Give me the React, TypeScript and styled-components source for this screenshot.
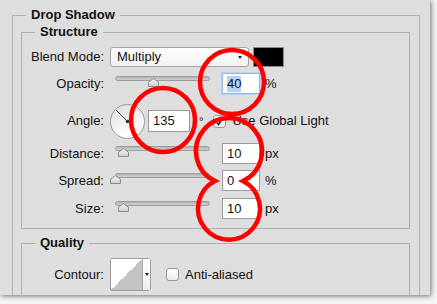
import React from 'react';
import styled, { createGlobalStyle } from 'styled-components';

const Global = createGlobalStyle`
  html, body { margin: 0; padding: 0; background: #f4f4f4; }
  body { font-family: "Liberation Sans", Arial, sans-serif; font-size: 13px; color: #111; }
  #root { width: 437px; height: 304px; }
`;

const PANEL_BG = '#dedede';
const LINE = '#b0b0b0';

const Stage = styled.div`
  position: relative;
  width: 437px;
  height: 304px;
  overflow: hidden;
`;

const Panel = styled.div`
  box-sizing: border-box;
  width: 430px;
  height: 295px;
  padding: 15px 0 0 12px;
  background: ${PANEL_BG};
  box-shadow: 1px 1px 5px rgba(0, 0, 0, 0.55);
  overflow: hidden;
  display: flex;
  flex-direction: column;
`;

const Group = styled.section<{ $w?: number; $closed?: boolean; $mt?: number; $pad?: string; $grow?: boolean }>`
  box-sizing: border-box;
  ${p => (p.$w ? `width: ${p.$w}px;` : '')}
  border: 1px solid ${LINE};
  border-bottom: ${p => (p.$closed ? `1px solid ${LINE}` : 'none')};
  margin-top: ${p => p.$mt ?? 0}px;
  padding: ${p => p.$pad ?? '0'};
  display: flex;
  flex-direction: column;
  ${p => (p.$grow ? 'flex: 1 0 auto;' : 'flex: none;')}
`;

const Legend = styled.h2<{ $indent: number }>`
  margin: -9px 0 0 ${p => p.$indent}px;
  padding: 0 5px;
  align-self: flex-start;
  background: ${PANEL_BG};
  font: bold 13px/16px "Liberation Sans", Arial, sans-serif;
  color: #111;
`;

const Row = styled.div<{ $h: number; $mt: number }>`
  display: flex;
  align-items: center;
  height: ${p => p.$h}px;
  margin-top: ${p => p.$mt}px;
  flex: none;
`;

const Label = styled.span`
  flex: none;
  width: 82px;
  margin-right: 6px;
  text-align: right;
  line-height: 16px;
  color: #111;
`;

const Select = styled.div`
  box-sizing: border-box;
  width: 139px;
  height: 20px;
  padding: 0 6px;
  border: 1px solid #a4a4a4;
  border-radius: 3px;
  background: linear-gradient(#ffffff, #f1f1f1);
  display: flex;
  align-items: center;
  justify-content: space-between;
  line-height: 16px;
`;

const Caret = styled.span`
  width: 0;
  height: 0;
  border-left: 2.5px solid transparent;
  border-right: 2.5px solid transparent;
  border-top: 3px solid #222;
`;

const Swatch = styled.div`
  box-sizing: border-box;
  width: 31px;
  height: 20px;
  margin-left: 4px;
  background: #000;
  border: 1px solid #8c8c8c;
`;

const SliderWrap = styled.div`
  position: relative;
  flex: none;
  align-self: stretch;
  width: 104px;
  padding-top: 3px;
  box-sizing: border-box;
`;

const Track = styled.div`
  box-sizing: border-box;
  margin-left: 5px;
  width: 95px;
  height: 5px;
  border: 1px solid #9d9d9d;
  border-radius: 3px;
  background: linear-gradient(#b4b4b4, #cfcfcf);
`;

const Thumb = styled.svg`
  position: absolute;
  top: 5px;
  width: 11px;
  height: 9px;
`;

const NumBox = styled.div<{ $w: number; $h: number; $focus?: boolean }>`
  box-sizing: border-box;
  flex: none;
  width: ${p => p.$w}px;
  height: ${p => p.$h}px;
  padding: 0 4px;
  background: #fff;
  border: 1px solid ${p => (p.$focus ? '#8fb6e6' : '#9c9c9c')};
  box-shadow: ${p => (p.$focus ? '0 0 0 1px #b9d3f3' : 'none')};
  display: flex;
  align-items: center;
  line-height: 16px;
`;

const Selected = styled.span`
  background: #b3d3fa;
`;

const Unit = styled.span`
  margin-left: 5px;
  line-height: 16px;
`;

const Gap = styled.span<{ $w: number }>`
  flex: none;
  width: ${p => p.$w}px;
`;

const Dial = styled.div`
  box-sizing: border-box;
  flex: none;
  width: 35px;
  height: 35px;
  border-radius: 50%;
  border: 1px solid #9a9a9a;
  background: linear-gradient(160deg, #dcdcdc, #fbfbfb 70%);
`;

const Degree = styled.span`
  flex: none;
  align-self: flex-start;
  margin: 12px 0 0 9px;
  font-size: 11px;
  line-height: 12px;
`;

const Check = styled.div<{ $ml: number }>`
  box-sizing: border-box;
  flex: none;
  width: 13px;
  height: 13px;
  margin-left: ${p => p.$ml}px;
  border: 1px solid #9a9a9a;
  border-radius: 3px;
  background: linear-gradient(#ffffff, #ececec);
  display: flex;
  align-items: center;
  justify-content: center;
`;

const CheckText = styled.span`
  margin-left: 6px;
  line-height: 16px;
  white-space: nowrap;
`;

const Contour = styled.div`
  box-sizing: border-box;
  flex: none;
  width: 41px;
  height: 33px;
  display: flex;
  border: 1px solid #9c9c9c;
  border-radius: 2px 3px 3px 2px;
  background: #fafafa;
`;

const ContourPreview = styled.div`
  flex: none;
  width: 32px;
  height: 100%;
  box-sizing: border-box;
  border-right: 1px solid #a8a8a8;
  background: linear-gradient(to bottom right, #ffffff 50%, #c3c3c3 50%);
`;

const ContourButton = styled.div`
  flex: 1;
  display: flex;
  align-items: center;
  justify-content: center;
  background: linear-gradient(#ffffff, #eeeeee);
`;

const Marks = styled.svg`
  position: absolute;
  left: 0;
  top: 0;
  width: 437px;
  height: 304px;
  pointer-events: none;
`;

function Slider({ value }: { value: number }) {
  const left = 5 + value * 95 - 5.5;
  const id = `tg${Math.round(value * 1000)}`;
  return (
    <SliderWrap>
      <Track />
      <Thumb viewBox="0 0 11 9" style={{ left }}>
        <defs>
          <linearGradient id={id} x1="0" y1="0" x2="0" y2="1">
            <stop offset="0" stopColor="#f7f7f7" />
            <stop offset="1" stopColor="#cdcdcd" />
          </linearGradient>
        </defs>
        <path
          d="M0.5 8.5 L0.5 4.2 L5.5 0.6 L10.5 4.2 L10.5 8.5 Z"
          fill={`url(#${id})`}
          stroke="#8a8a8a"
          strokeWidth="1"
        />
      </Thumb>
    </SliderWrap>
  );
}

function SliderRow({ label, value, text, unit, mt, focus }: { label: string; value: number; text: string; unit: string; mt: number; focus?: boolean }) {
  return (
    <Row $h={21} $mt={mt}>
      <Label>{label}</Label>
      <Slider value={value} />
      <Gap $w={8} />
      <NumBox $w={38} $h={21} $focus={focus}>
        {focus ? <Selected>{text}</Selected> : text}
      </NumBox>
      <Unit>{unit}</Unit>
    </Row>
  );
}

export default function App() {
  return (
    <>
      <Global />
      <Stage>
        <Panel>
          <Group $w={408} $pad="0 9px 0 8px" $grow>
            <Legend $indent={5}>Drop Shadow</Legend>
            <Group $closed $mt={9} $pad="0 0 9px 0">
              <Legend $indent={13}>Structure</Legend>
              <Row $h={20} $mt={7}>
                <Label>Blend Mode:</Label>
                <Select>
                  <span>Multiply</span>
                  <Caret />
                </Select>
                <Swatch />
              </Row>
              <SliderRow label="Opacity:" value={0.4} text="40" unit="%" mt={6} focus />
              <Row $h={36} $mt={9}>
                <Label>Angle:</Label>
                <Dial>
                  <svg width="33" height="33" viewBox="0 0 33 33">
                    <line x1="16.5" y1="16.5" x2="5" y2="5" stroke="#444" strokeWidth="1" />
                    <circle cx="16.5" cy="16.5" r="1.8" fill="#333" />
                  </svg>
                </Dial>
                <Gap $w={3} />
                <NumBox $w={42} $h={22}>135</NumBox>
                <Degree>°</Degree>
                <Check $ml={10}>
                  <svg width="9" height="9" viewBox="0 0 9 9">
                    <path d="M1 4.5 L3.5 7.5 L8 1" fill="none" stroke="#222" strokeWidth="1.4" />
                  </svg>
                </Check>
                <CheckText>Use Global Light</CheckText>
              </Row>
              <SliderRow label="Distance:" value={0.09} text="10" unit="px" mt={4} />
              <SliderRow label="Spread:" value={0} text="0" unit="%" mt={6} />
              <SliderRow label="Size:" value={0.09} text="10" unit="px" mt={7} />
            </Group>
            <Group $mt={14} $grow>
              <Legend $indent={13}>Quality</Legend>
              <Row $h={33} $mt={7}>
                <Label>Contour:</Label>
                <Contour>
                  <ContourPreview />
                  <ContourButton>
                    <Caret />
                  </ContourButton>
                </Contour>
                <Check $ml={15} />
                <CheckText>Anti-aliased</CheckText>
              </Row>
            </Group>
          </Group>
        </Panel>
        <Marks viewBox="0 0 437 304">
          <g fill="none" stroke="#f00" strokeWidth="4.5">
            <circle cx="232" cy="82" r="32" />
            <circle cx="163" cy="120" r="32" />
            <path d="M215 181 A33 33 0 1 1 243 181 A31 31 0 1 1 215 181 Z" strokeLinejoin="miter" strokeMiterlimit="10" />
          </g>
        </Marks>
      </Stage>
    </>
  );
}
